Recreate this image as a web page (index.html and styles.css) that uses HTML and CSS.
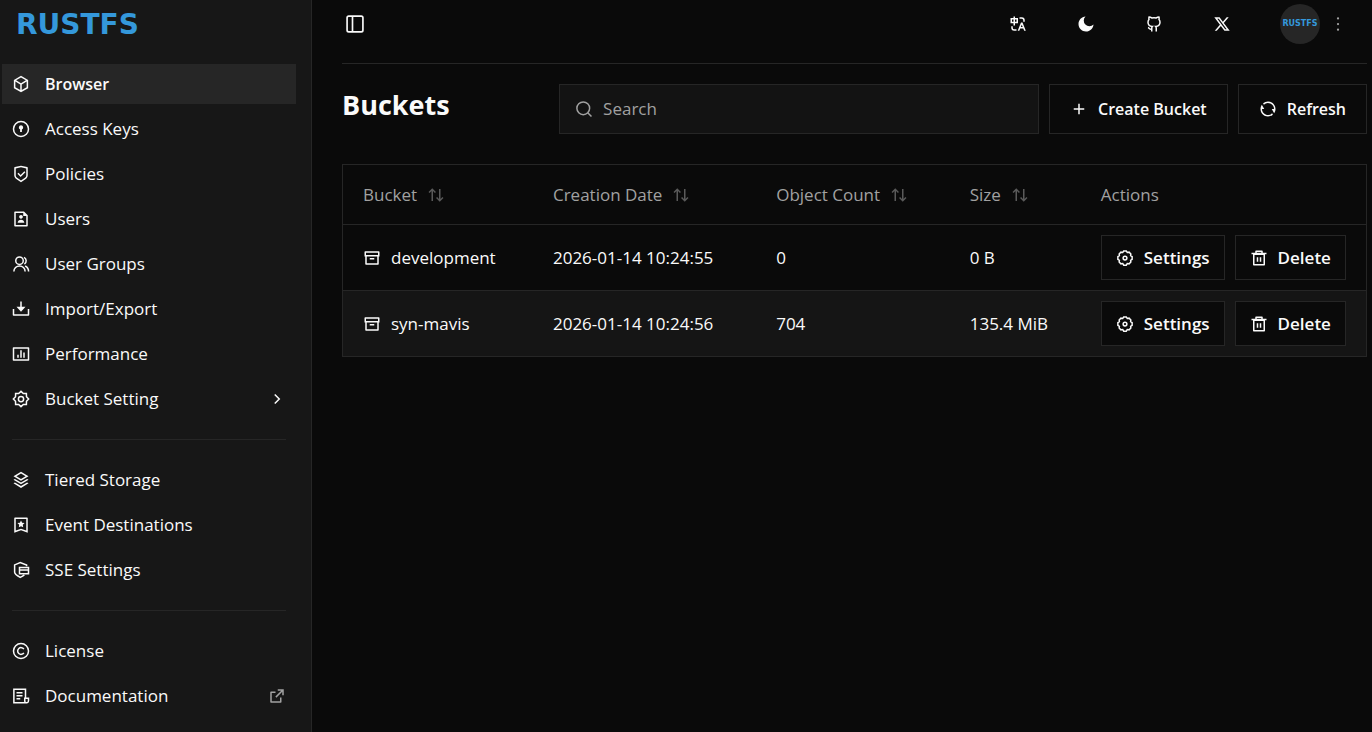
FILE: index.html
```html
<!DOCTYPE html>
<html lang="en">
<head>
    <meta charset="UTF-8">
    <meta name="viewport" content="width=device-width, initial-scale=1.0">
    <title>RustFS - Buckets</title>
    <link rel="stylesheet" href="styles.css">
</head>
<body>
    <svg class="sprite" aria-hidden="true">
        <symbol id="i-box" viewBox="0 0 24 24"><path d="M12 1L21.5 6.5V17.5L12 23L2.5 17.5V6.5L12 1ZM5.49 7.08L12 10.84L18.51 7.08L12 3.31L5.49 7.08ZM4.5 8.81V16.35L11 20.11V12.58L4.5 8.81ZM13 20.11L19.5 16.35V8.81L13 12.58V20.11Z"/></symbol>
        <symbol id="i-key" viewBox="0 0 24 24"><circle class="line" cx="12" cy="12" r="10"/><path d="M12 7a3 3 0 0 1 1.2 5.7V16h-2.4v-3.3A3 3 0 0 1 12 7Z"/></symbol>
        <symbol id="i-shield" viewBox="0 0 24 24"><path d="M12 1L20.217 2.826C20.675 2.928 21 3.333 21 3.802V13.789C21 15.795 19.997 17.668 18.328 18.781L12 23L5.672 18.781C4.003 17.668 3 15.795 3 13.789V3.802C3 3.333 3.326 2.928 3.783 2.826L12 1ZM12 3.049L5 4.604V13.789C5 15.126 5.668 16.375 6.781 17.117L12 20.596L17.219 17.117C18.332 16.375 19 15.126 19 13.789V4.604L12 3.049ZM16.452 8.222L17.867 9.636L11.503 16L7.26 11.757L8.674 10.343L11.502 13.171L16.452 8.222Z"/></symbol>
        <symbol id="i-user-file" viewBox="0 0 24 24"><path d="M15 4H5V20H19V8H15V4ZM3 2.992C3 2.444 3.447 2 3.999 2H16L21 7V20.993C21 21.549 20.556 22 20.007 22H3.993C3.445 22 3 21.545 3 21.008V2.992ZM12 11.5C10.62 11.5 9.5 10.38 9.5 9S10.62 6.5 12 6.5S14.5 7.62 14.5 9S13.38 11.5 12 11.5ZM7.53 17C7.775 14.75 9.684 13 12 13S16.225 14.75 16.47 17H7.53Z"/></symbol>
        <symbol id="i-group" viewBox="0 0 24 24"><g class="line"><circle cx="10" cy="7.5" r="5"/><path d="M2.5 22a7.5 7.5 0 0 1 15 0M16 3.2a5 5 0 0 1 .5 8.8M17.5 14.7a8 8 0 0 1 4.6 7.3"/></g></symbol>
        <symbol id="i-import" viewBox="0 0 24 24"><path d="M3 19H21V12H23V20C23 20.552 22.552 21 22 21H2C1.448 21 1 20.552 1 20V12H3V19ZM13 9H18L12 15.5L6 9H11V2H13V9Z"/></symbol>
        <symbol id="i-chart" viewBox="0 0 24 24"><path d="M2 3H22A1 1 0 0 1 23 4V20A1 1 0 0 1 22 21H2A1 1 0 0 1 1 20V4A1 1 0 0 1 2 3ZM3 5V19H21V5H3ZM7 13H9V17H7V13ZM11 7H13V17H11V7ZM15 10H17V17H15V10Z"/></symbol>
        <symbol id="i-gear" viewBox="0 0 24 24"><g class="line"><path d="M12 1.8 15.1 4.7 19.2 4.8 19.3 8.9 22.2 12 19.3 15.1 19.2 19.2 15.1 19.3 12 22.2 8.9 19.3 4.8 19.2 4.7 15.1 1.8 12 4.7 8.9 4.8 4.8 8.9 4.7Z"/><circle cx="12" cy="12" r="3.5"/></g></symbol>
        <symbol id="i-cog" viewBox="0 0 24 24"><g class="line"><path d="M10.3 2.5h3.4l1.3 2 2.4-.3 2.4 2.4-.3 2.400 2 1.300v3.400l-2 1.300.3 2.400-2.400 2.400-2.400-.3-1.300 2h-3.400l-1.300-2-2.400.3-2.400-2.400.3-2.400-2-1.300v-3.400l2-1.300-.3-2.400 2.400-2.400 2.400.3Z"/><circle cx="12" cy="12" r="2.5"/></g></symbol>
        <symbol id="i-layers" viewBox="0 0 24 24"><path d="M20.083 15.2L22 16.35L12 22.7L2 16.35L3.917 15.2L12 20.05L20.083 15.2ZM20.083 10.5L22 11.65L12 17.65L2 11.65L3.917 10.5L12 15.35L20.083 10.5ZM12 1L22 7L12 13L2 7L12 1ZM12 3.332L5.887 7L12 10.668L18.113 7L12 3.332Z"/></symbol>
        <symbol id="i-bookmark" viewBox="0 0 24 24"><path d="M4 2H20A1 1 0 0 1 21 3V22.276L12 19.03L3 22.276V3A1 1 0 0 1 4 2ZM19 19.43V4H5V19.43L12 16.9L19 19.43ZM12 13.5L9.06 15.046L9.622 11.773L7.245 9.455L10.53 8.977L12 6L13.47 8.977L16.755 9.455L14.378 11.773L14.94 15.045L12 13.5Z"/></symbol>
        <symbol id="i-sse" viewBox="0 0 24 24"><g class="line"><path d="M19.5 7V5.5L11 2 3.5 5.2V15c0 2 3 4.3 7.5 6.8 2-.9 4-2 5.5-3.3"/><path d="M10 8.5h12V17H10zM10 12h12"/></g></symbol>
        <symbol id="i-copyright" viewBox="0 0 24 24"><g class="line"><circle cx="12" cy="12" r="10"/><path d="M15.8 14.5a4.5 4.5 0 1 1 0-5"/></g></symbol>
        <symbol id="i-doc" viewBox="0 0 24 24"><g class="line"><path d="M18 15V3H2.5v18H20a2.500 2.500 0 0 0 2-2.500V15H17v4a2 2 0 0 0 2 2"/><path d="M6 7.5h8M6 11.5h8M6 15.5h5"/></g></symbol>
        <symbol id="i-external" viewBox="0 0 24 24"><path d="M10 6V8H5V19H16V14H18V20A1 1 0 0 1 17 21H4A1 1 0 0 1 3 20V7A1 1 0 0 1 4 6H10ZM21 3V11H19V6.413L11.207 14.207L9.793 12.793L17.585 5H13V3H21Z"/></symbol>
        <symbol id="i-chevron" viewBox="0 0 24 24"><path class="line" d="m9 6 6 6-6 6"/></symbol>
        <symbol id="i-panel" viewBox="0 0 24 24"><g class="line"><rect x="2.5" y="2.5" width="19" height="19" rx="2"/><path d="M9 2.5v19"/></g></symbol>
        <symbol id="i-translate" viewBox="0 0 24 24"><path d="M5 15V17A2 2 0 0 0 7 19H10V21H7A4 4 0 0 1 3 17V15H5ZM18 10L22.4 21H20.245L19.044 18H14.954L13.755 21H11.601L16 10H18ZM17 12.885L15.753 16H18.245L17 12.885ZM8 2V4H12V11H8V14H6V11H2V4H6V2H8ZM17 3A4 4 0 0 1 21 7V9H19V7A2 2 0 0 0 17 5H14V3H17ZM6 6H4V9H6V6ZM10 6H8V9H10V6Z"/></symbol>
        <symbol id="i-moon" viewBox="0 0 24 24"><path d="M11.38 2.019a7.5 7.5 0 1 0 10.6 10.6C21.662 17.854 17.316 22 12.001 22 6.477 22 2 17.523 2 12 2 6.685 6.147 2.339 11.38 2.019Z"/></symbol>
        <symbol id="i-github" viewBox="0 0 24 24"><g class="line"><path d="M9 22v-4.5c0-1 .3-1.8.8-2.3-3.3-.3-5.8-1.7-5.8-5.7 0-1.5.5-2.7 1.3-3.6-.3-1.2-.2-2.4.2-3.4 1.3 0 2.5.6 3.5 1.4a12 12 0 0 1 6 0c1-.8 2.2-1.4 3.5-1.4.4 1 .5 2.2.2 3.4.8.9 1.3 2.1 1.3 3.6 0 4-2.5 5.4-5.8 5.7.5.5.8 1.3.8 2.3V22M9 19c-3 .8-3-1.8-5-2.3"/></g></symbol>
        <symbol id="i-x" viewBox="0 0 24 24"><path d="M10.488 14.651L15.25 21H22.25L14.392 10.522L20.93 3H18.28L13.165 8.885L8.75 3H1.75L9.261 13.015L2.32 21H4.97L10.488 14.651ZM16.25 19L5.75 5H7.75L18.25 19H16.25Z"/></symbol>
        <symbol id="i-dots" viewBox="0 0 24 24"><circle cx="12" cy="4.5" r="1.5"/><circle cx="12" cy="12" r="1.5"/><circle cx="12" cy="19.5" r="1.5"/></symbol>
        <symbol id="i-search" viewBox="0 0 24 24"><g class="line"><circle cx="11" cy="11" r="8.5"/><path d="m17 17 5 5"/></g></symbol>
        <symbol id="i-plus" viewBox="0 0 24 24"><path d="M11 11V5H13V11H19V13H13V19H11V13H5V11Z"/></symbol>
        <symbol id="i-refresh" viewBox="0 0 24 24"><path d="M5.463 4.433A9.961 9.961 0 0 1 12 2C17.523 2 22 6.477 22 12C22 14.136 21.33 16.116 20.19 17.741L17 12H20A8 8 0 0 0 6.46 6.228L5.463 4.433ZM18.537 19.567A9.961 9.961 0 0 1 12 22C6.477 22 2 17.523 2 12C2 9.864 2.67 7.884 3.81 6.26L7 12H4A8 8 0 0 0 17.54 17.772L18.537 19.567Z"/></symbol>
        <symbol id="i-sort" viewBox="0 0 24 24"><path d="M11.95 7.95L10.535 9.364L8 6.828V20H6V6.828L3.465 9.364L2.05 7.95L7 3L11.95 7.95ZM21.95 16.05L17 21L12.05 16.05L13.464 14.636L16 17.172V4H18V17.172L20.536 14.636L21.95 16.05Z"/></symbol>
        <symbol id="i-archive" viewBox="0 0 24 24"><path d="M3 10H2V4A1 1 0 0 1 3 3H21A1 1 0 0 1 22 4V10H21V20A1 1 0 0 1 20 21H4A1 1 0 0 1 3 20V10ZM19 10H5V19H19V10ZM4 5V8H20V5H4ZM9 12H15V14H9V12Z"/></symbol>
        <symbol id="i-trash" viewBox="0 0 24 24"><path d="M17 5H22V7H20V21A1 1 0 0 1 19 22H5A1 1 0 0 1 4 21V7H2V5H7V3A1 1 0 0 1 8 2H16A1 1 0 0 1 17 3V5ZM18 8H6V20H18V8ZM9 11H11V17H9V11ZM13 11H15V17H13V11ZM9 4V5H15V4H9Z"/></symbol>
    </svg>

    <div class="app">
        <aside class="sidebar">
            <a class="logo" href="#">RUSTFS</a>
            <nav class="menu">
                <a class="menu-item active" href="#"><svg class="icon"><use href="#i-box"/></svg>Browser</a>
                <a class="menu-item" href="#"><svg class="icon"><use href="#i-key"/></svg>Access Keys</a>
                <a class="menu-item" href="#"><svg class="icon"><use href="#i-shield"/></svg>Policies</a>
                <a class="menu-item" href="#"><svg class="icon"><use href="#i-user-file"/></svg>Users</a>
                <a class="menu-item" href="#"><svg class="icon"><use href="#i-group"/></svg>User Groups</a>
                <a class="menu-item" href="#"><svg class="icon"><use href="#i-import"/></svg>Import/Export</a>
                <a class="menu-item" href="#"><svg class="icon"><use href="#i-chart"/></svg>Performance</a>
                <button class="menu-item" type="button"><svg class="icon"><use href="#i-gear"/></svg>Bucket Setting<svg class="icon trail"><use href="#i-chevron"/></svg></button>
            </nav>
            <hr class="divider">
            <nav class="menu">
                <a class="menu-item" href="#"><svg class="icon"><use href="#i-layers"/></svg>Tiered Storage</a>
                <a class="menu-item" href="#"><svg class="icon"><use href="#i-bookmark"/></svg>Event Destinations</a>
                <a class="menu-item" href="#"><svg class="icon"><use href="#i-sse"/></svg>SSE Settings</a>
            </nav>
            <hr class="divider">
            <nav class="menu">
                <a class="menu-item" href="#"><svg class="icon"><use href="#i-copyright"/></svg>License</a>
                <a class="menu-item" href="#"><svg class="icon"><use href="#i-doc"/></svg>Documentation<svg class="icon trail muted"><use href="#i-external"/></svg></a>
            </nav>
        </aside>

        <main class="main">
            <header class="topbar">
                <button class="icon-button toggle" type="button" aria-label="Toggle sidebar"><svg class="icon large"><use href="#i-panel"/></svg></button>
                <div class="topbar-actions">
                    <button class="icon-button" type="button" aria-label="Language"><svg class="icon"><use href="#i-translate"/></svg></button>
                    <button class="icon-button" type="button" aria-label="Theme"><svg class="icon"><use href="#i-moon"/></svg></button>
                    <a class="icon-button" href="#" aria-label="GitHub"><svg class="icon"><use href="#i-github"/></svg></a>
                    <a class="icon-button" href="#" aria-label="X"><svg class="icon"><use href="#i-x"/></svg></a>
                    <button class="user" type="button" aria-label="Account">
                        <span class="avatar">RUSTFS</span>
                        <svg class="icon muted"><use href="#i-dots"/></svg>
                    </button>
                </div>
            </header>

            <div class="page-header">
                <h1>Buckets</h1>
                <div class="tools">
                    <label class="search">
                        <svg class="icon"><use href="#i-search"/></svg>
                        <input type="text" placeholder="Search" aria-label="Search">
                    </label>
                    <button class="button" type="button"><svg class="icon"><use href="#i-plus"/></svg>Create Bucket</button>
                    <button class="button" type="button"><svg class="icon"><use href="#i-refresh"/></svg>Refresh</button>
                </div>
            </div>

            <table class="buckets">
                <colgroup>
                    <col class="col-bucket">
                    <col class="col-date">
                    <col class="col-count">
                    <col class="col-size">
                    <col>
                </colgroup>
                <thead>
                    <tr>
                        <th><button class="sort" type="button">Bucket<svg class="icon"><use href="#i-sort"/></svg></button></th>
                        <th><button class="sort" type="button">Creation Date<svg class="icon"><use href="#i-sort"/></svg></button></th>
                        <th><button class="sort" type="button">Object Count<svg class="icon"><use href="#i-sort"/></svg></button></th>
                        <th><button class="sort" type="button">Size<svg class="icon"><use href="#i-sort"/></svg></button></th>
                        <th>Actions</th>
                    </tr>
                </thead>
                <tbody>
                    <tr>
                        <td><a class="bucket-link" href="#"><svg class="icon"><use href="#i-archive"/></svg>development</a></td>
                        <td>2026-01-14 10:24:55</td>
                        <td>0</td>
                        <td>0 B</td>
                        <td>
                            <div class="row-actions">
                                <button class="button small" type="button"><svg class="icon"><use href="#i-cog"/></svg>Settings</button>
                                <button class="button small" type="button"><svg class="icon"><use href="#i-trash"/></svg>Delete</button>
                            </div>
                        </td>
                    </tr>
                    <tr>
                        <td><a class="bucket-link" href="#"><svg class="icon"><use href="#i-archive"/></svg>syn-mavis</a></td>
                        <td>2026-01-14 10:24:56</td>
                        <td>704</td>
                        <td>135.4 MiB</td>
                        <td>
                            <div class="row-actions">
                                <button class="button small" type="button"><svg class="icon"><use href="#i-cog"/></svg>Settings</button>
                                <button class="button small" type="button"><svg class="icon"><use href="#i-trash"/></svg>Delete</button>
                            </div>
                        </td>
                    </tr>
                </tbody>
            </table>
        </main>
    </div>
</body>
</html>
```
FILE: styles.css
```css
* {
    box-sizing: border-box;
}

body {
    margin: 0;
    font-family: "Segoe UI", "Open Sans", "Noto Sans", sans-serif;
    font-size: 17px;
    line-height: 24px;
    color: #fafafa;
    background-color: #0a0a0a;
}

a {
    color: inherit;
    text-decoration: none;
}

button, input {
    padding: 0;
    border: 0;
    font: inherit;
    color: inherit;
    background: none;
}

button {
    cursor: pointer;
}

.sprite {
    display: none;
}

.icon {
    width: 18px;
    height: 18px;
    flex-shrink: 0;
    fill: currentColor;
}

.icon.large {
    width: 20px;
    height: 20px;
}

.line {
    fill: none;
    stroke: currentColor;
    stroke-width: 2;
}

.muted {
    color: #a1a1a1;
}

.app {
    display: flex;
    min-height: 100vh;
}

/* Sidebar */
.sidebar {
    width: 312px;
    flex-shrink: 0;
    padding: 0 15px 14px 2px;
    background-color: #171717;
    border-right: 1px solid #262626;
}

.logo {
    display: block;
    height: 64px;
    padding-left: 14px;
    font-family: "DejaVu Sans", sans-serif;
    font-size: 28px;
    font-weight: bold;
    line-height: 50px;
    color: #3498db;
}

.menu {
    display: flex;
    flex-direction: column;
    gap: 5px;
}

.menu-item {
    display: flex;
    align-items: center;
    gap: 15px;
    height: 40px;
    padding: 0 10px;
    text-align: left;
}

.menu-item:hover, .menu-item.active {
    background-color: #262626;
}

.menu-item.active {
    font-size: 16px;
    font-weight: 600;
}

.trail {
    margin-left: auto;
}

.divider {
    height: 1px;
    margin: 20px 10px;
    border: 0;
    background-color: #262626;
}

/* Main area */
.main {
    flex: 1;
    min-width: 0;
    padding: 0 5px 0 30px;
}

.topbar {
    display: flex;
    align-items: center;
    justify-content: space-between;
    padding-bottom: 15px;
    border-bottom: 1px solid #262626;
}

.topbar-actions {
    display: flex;
    align-items: center;
    gap: 23px;
}

.icon-button {
    display: flex;
    align-items: center;
    justify-content: center;
    width: 45px;
    height: 48px;
}

.icon-button.toggle {
    width: 26px;
}

.user {
    display: flex;
    align-items: center;
    gap: 9px;
    padding: 0 20px 0 13px;
}

.avatar {
    width: 40px;
    height: 40px;
    border-radius: 50%;
    background-color: #262626;
    font-family: "DejaVu Sans", sans-serif;
    font-size: 8px;
    font-weight: bold;
    line-height: 40px;
    text-align: center;
    color: #3498db;
}

.page-header {
    display: flex;
    justify-content: space-between;
    margin: 20px 0 30px;
}

h1 {
    margin: 0;
    font-size: 27px;
    font-weight: bold;
    line-height: 42px;
}

.tools {
    display: flex;
    gap: 10px;
}

.search {
    display: flex;
    align-items: center;
    gap: 10px;
    width: 480px;
    padding: 0 15px;
    background-color: #131313;
    border: 1px solid #262626;
    color: #a1a1a1;
}

.search input {
    flex: 1;
    outline: none;
}

.search input::placeholder {
    color: #a1a1a1;
    opacity: 1;
}

.button {
    display: flex;
    align-items: center;
    gap: 10px;
    height: 50px;
    padding: 0 20px;
    border: 1px solid #262626;
    background-color: #0a0a0a;
    font-size: 16px;
    font-weight: 600;
}

.button:hover {
    background-color: #262626;
}

.button.small {
    height: 45px;
    padding: 0 14px;
    font-size: 17px;
}

/* Table */
.buckets {
    width: 100%;
    border: 1px solid #262626;
    border-collapse: collapse;
    table-layout: fixed;
}

.col-bucket {
    width: 18.6%;
}

.col-date {
    width: 21.8%;
}

.col-count {
    width: 18.9%;
}

.col-size {
    width: 12.8%;
}

.buckets th {
    height: 60px;
    padding: 0 20px;
    font-weight: 500;
    text-align: left;
    color: #a1a1a1;
}

.buckets td {
    height: 66px;
    padding: 0 20px;
    border-top: 1px solid #262626;
}

.buckets tbody tr:nth-child(even) {
    background-color: #151515;
}

.sort {
    display: flex;
    align-items: center;
    gap: 10px;
    font-weight: 500;
}

.sort .icon {
    color: #5a5a5a;
}

.bucket-link, .row-actions {
    display: flex;
    align-items: center;
    gap: 10px;
}
```
